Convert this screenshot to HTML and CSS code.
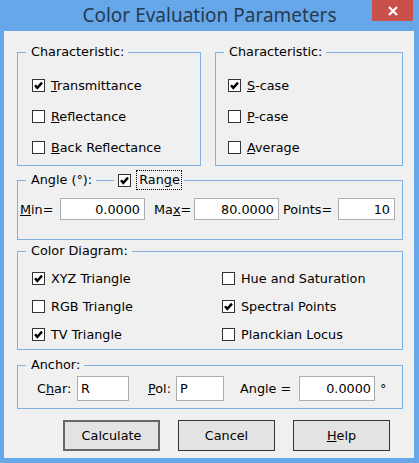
FILE: index.html
```html
<!DOCTYPE html>
<html lang="en">
  <head>
    <meta charset="UTF-8" />
    <title>Color Evaluation Parameters</title>
    <link rel="stylesheet" href="styles.css">
  </head>
  <body>
    <div class="window">
      <div class="titlebar">
        <span class="title">Color Evaluation Parameters</span>
        <span class="close">
          <svg width="10" height="10" viewBox="0 0 10 10"><path d="M1 1L9 9M9 1L1 9" stroke="#fff" stroke-width="2.2" /></svg>
        </span>
      </div>

      <div class="client">
        <div class="pair">
          <fieldset class="group half-left">
            <legend>Characteristic:</legend>
            <div class="list">
              <div class="check"><span class="box"><svg width="11" height="11" viewBox="0 0 11 11"><path d="M2 5.3L4.3 7.9L9 2.6" fill="none" stroke="#000" stroke-width="2.4" /></svg></span><span><u>T</u>ransmittance</span></div>
              <div class="check"><span class="box"></span><span><u>R</u>eflectance</span></div>
              <div class="check"><span class="box"></span><span><u>B</u>ack Reflectance</span></div>
            </div>
          </fieldset>
          <fieldset class="group half-right">
            <legend>Characteristic:</legend>
            <div class="list">
              <div class="check"><span class="box"><svg width="11" height="11" viewBox="0 0 11 11"><path d="M2 5.3L4.3 7.9L9 2.6" fill="none" stroke="#000" stroke-width="2.4" /></svg></span><span><u>S</u>-case</span></div>
              <div class="check"><span class="box"></span><span><u>P</u>-case</span></div>
              <div class="check"><span class="box"></span><span><u>A</u>verage</span></div>
            </div>
          </fieldset>
        </div>

        <fieldset class="group angle">
          <legend>
            <span>Angle (°):</span>
            <span class="dash"></span>
            <span class="box"><svg width="11" height="11" viewBox="0 0 11 11"><path d="M2 5.3L4.3 7.9L9 2.6" fill="none" stroke="#000" stroke-width="2.4" /></svg></span>
            <span class="focus">Ran<u>g</u>e</span>
          </legend>
          <div class="fields">
            <label class="lbl-min"><u>M</u>in=</label>
            <input class="num in-min" type="text" value="0.0000" />
            <label class="lbl-max">Ma<u>x</u>=</label>
            <input class="num in-max" type="text" value="80.0000" />
            <label class="lbl-pts">Points=</label>
            <input class="num in-pts" type="text" value="10" />
          </div>
        </fieldset>

        <fieldset class="group diagram">
          <legend>Color Diagram:</legend>
          <div class="grid">
            <div class="check"><span class="box"><svg width="11" height="11" viewBox="0 0 11 11"><path d="M2 5.3L4.3 7.9L9 2.6" fill="none" stroke="#000" stroke-width="2.4" /></svg></span><span>XYZ Triangle</span></div>
            <div class="check"><span class="box"></span><span>Hue and Saturation</span></div>
            <div class="check"><span class="box"></span><span>RGB Triangle</span></div>
            <div class="check"><span class="box"><svg width="11" height="11" viewBox="0 0 11 11"><path d="M2 5.3L4.3 7.9L9 2.6" fill="none" stroke="#000" stroke-width="2.4" /></svg></span><span>Spectral Points</span></div>
            <div class="check"><span class="box"><svg width="11" height="11" viewBox="0 0 11 11"><path d="M2 5.3L4.3 7.9L9 2.6" fill="none" stroke="#000" stroke-width="2.4" /></svg></span><span>TV Triangle</span></div>
            <div class="check"><span class="box"></span><span>Planckian Locus</span></div>
          </div>
        </fieldset>

        <fieldset class="group anchor">
          <legend>Anchor:</legend>
          <div class="fields">
            <label class="lbl-char">C<u>h</u>ar:</label>
            <input class="txt in-char" type="text" value="R" />
            <label class="lbl-pol"><u>P</u>ol:</label>
            <input class="txt in-pol" type="text" value="P" />
            <label class="lbl-ang">An<u>g</u>le =</label>
            <input class="num in-ang" type="text" value="0.0000" />
            <span class="deg">°</span>
          </div>
        </fieldset>

        <div class="buttons">
          <button class="btn default">Calculate</button>
          <button class="btn">Cancel</button>
          <button class="btn"><u>H</u>elp</button>
        </div>
      </div>
    </div>
  </body>
</html>
```

FILE: styles.css
```css
body {
  margin: 0;
  font-family: "DejaVu Sans", sans-serif;
  font-size: 12.8px;
  color: #000;
}
.window {
  width: 419px;
  height: 463px;
  box-sizing: border-box;
  background-color: #66a7ea;
  display: flex;
  flex-direction: column;
}
.titlebar {
  height: 31px;
  display: grid;
  grid-template-columns: 47px 1fr 47px;
  align-items: start;
}
.title {
  grid-column: 2;
  text-align: center;
  font-family: "Noto Sans", sans-serif;
  font-size: 19px;
  line-height: 30px;
  color: #263a50;
}
.close {
  grid-column: 3;
  width: 41px;
  height: 21px;
  background-color: #c9504b;
  display: flex;
  align-items: center;
  justify-content: center;
}
.client {
  flex: 1;
  margin: 0 5px 5px 4px;
  background-color: #f0f0f0;
  padding: 13px 11px 0 13px;
}
.pair {
  display: grid;
  grid-template-columns: 184px 1fr;
  gap: 14px;
}
.group {
  margin: 0;
  padding: 0;
  min-width: 0;
  border: 1px solid #7fb1e3;
}
.group legend {
  margin-left: 8px;
  padding: 0 4px 0 5px;
  line-height: 16px;
  height: 16px;
  display: flex;
  align-items: center;
}
.list {
  padding: 10px 0 2px 14px;
}
.half-right .list {
  padding-left: 12px;
}
.check {
  height: 31px;
  display: flex;
  align-items: center;
  gap: 6px;
}
.box {
  width: 13px;
  height: 13px;
  box-sizing: border-box;
  border: 1px solid #333;
  background-color: #fff;
  display: inline-flex;
  align-items: center;
  justify-content: center;
  flex: none;
}
.angle {
  margin-top: 6px;
}
.angle legend {
  padding-right: 3px;
}
.dash {
  width: 18px;
  height: 1px;
  margin: 0 4px;
  background-color: #7fb1e3;
}
.angle legend .box {
  margin-right: 6px;
}
.focus {
  padding: 1px 1px 1px 2px;
  outline: 1px dotted #000;
}
.fields {
  display: flex;
  align-items: center;
}
.angle .fields {
  padding: 10px 0 19px 2px;
}
.fields label {
  flex: none;
}
input {
  font: inherit;
  box-sizing: border-box;
  border: 1px solid #abadb3;
  background-color: #fff;
  margin: 0;
  padding: 0 4px;
  outline: none;
}
.angle input {
  height: 22px;
}
.num {
  text-align: right;
}
.lbl-min { width: 40px; }
.in-min { width: 85px; }
.lbl-max { width: 40px; margin-left: 9px; }
.in-max { width: 85px; }
.lbl-pts { width: 55px; margin-left: 4px; }
.in-pts { width: 57px; }
.diagram {
  margin-top: 3px;
}
.grid {
  display: grid;
  grid-template-columns: 190px 1fr;
  padding: 5px 0 1px 14px;
}
.grid .check {
  height: 28px;
}
.anchor {
  margin-top: 7px;
}
.anchor .fields {
  padding: 3px 0 7px 19px;
}
.anchor input {
  height: 25px;
  padding: 0 3px;
}
.lbl-char { width: 40px; }
.in-char { width: 52px; }
.lbl-pol { width: 28px; margin-left: 19px; }
.in-pol { width: 48px; }
.lbl-ang { width: 59px; margin-left: 16px; }
.in-ang { width: 76px; }
.deg {
  margin-left: 5px;
}
.buttons {
  display: flex;
  gap: 18px;
  margin-top: 11px;
  padding-left: 46px;
}
.btn {
  width: 97px;
  height: 31px;
  box-sizing: border-box;
  font: inherit;
  color: #000;
  background-color: #e3e3e3;
  border: 1px solid #333;
  padding: 0;
}
.btn.default {
  border: 2px solid #666;
}
```
